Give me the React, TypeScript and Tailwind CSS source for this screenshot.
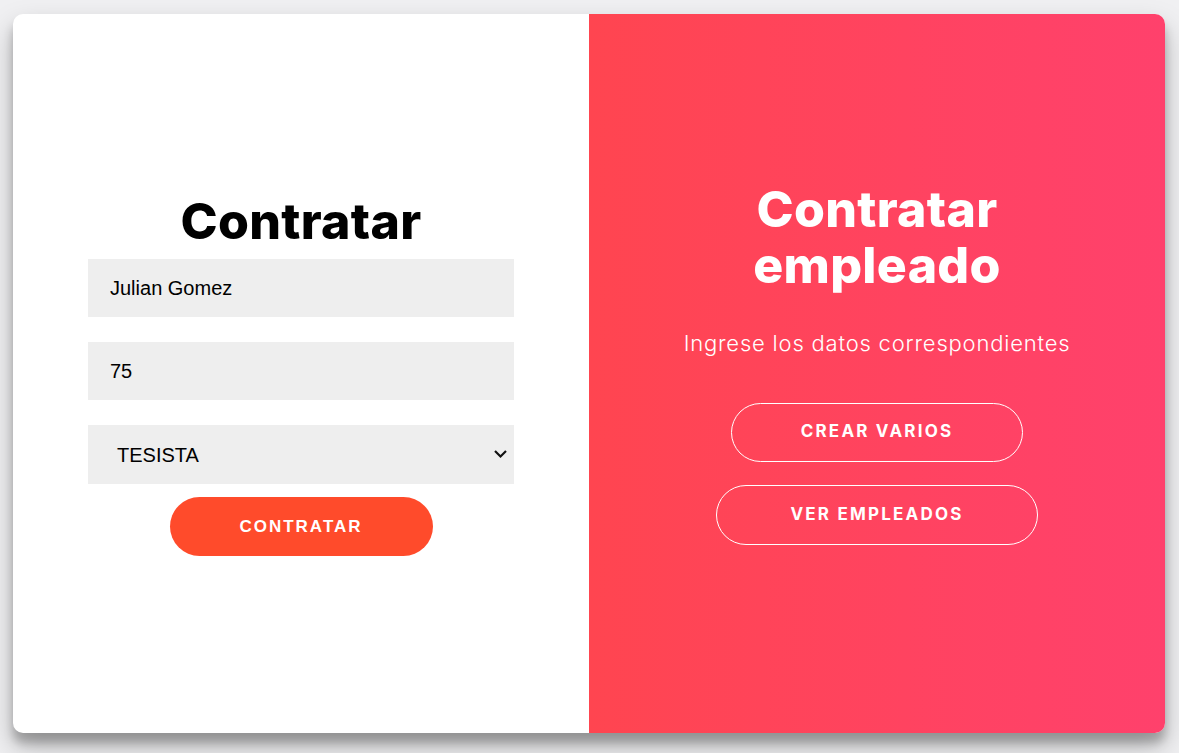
import React from 'react';

const mont = "font-['Inter','Noto_Sans',sans-serif]";

export default function App() {
  return (
    <div className="w-[1179px] h-[753px] bg-[#f0f0f2] flex items-start justify-start pl-[13px] pt-[14px]">
      <div className="w-[1152px] h-[719px] rounded-[10px] overflow-hidden bg-white flex shadow-[0_14px_28px_rgba(0,0,0,0.25),0_10px_10px_rgba(0,0,0,0.22)]">
        {/* formulario */}
        <div className="w-[576px] h-full flex flex-col items-center justify-center pt-[2px]">
          <h1 className={`${mont} text-[50px] leading-[56px] font-extrabold tracking-[0.3px] text-black mb-[10px]`}>Contratar</h1>
          <input
            defaultValue="Julian Gomez"
            className="w-[426px] h-[58px] bg-[#eeeeee] px-[22px] text-[20px] text-black outline-none font-['Liberation_Sans',Arial,sans-serif]"
          />
          <input
            defaultValue="75"
            className="w-[426px] h-[58px] mt-[25px] bg-[#eeeeee] px-[22px] text-[20px] text-black outline-none font-['Liberation_Sans',Arial,sans-serif]"
          />
          <div className="relative w-[426px] h-[59px] mt-[25px] bg-[#eeeeee] flex items-center">
            <span className="pl-[29px] text-[20px] text-black font-['Liberation_Sans',Arial,sans-serif]">TESISTA</span>
            <svg className="absolute right-[6px] top-[23px]" width="15" height="11" viewBox="0 0 15 11" fill="none">
              <path d="M2 3 L7.5 8.5 L13 3" stroke="#111" strokeWidth="2.2" />
            </svg>
          </div>
          <button className="mt-[13px] w-[263px] h-[59px] rounded-full bg-[#ff4b2b] text-white text-[17px] font-bold tracking-[2px] font-['Liberation_Sans',Arial,sans-serif]">
            CONTRATAR
          </button>
        </div>
        {/* panel derecho */}
        <div className="w-[576px] h-full bg-gradient-to-r from-[#ff4550] to-[#ff416c] flex flex-col items-center justify-center text-white pb-[22px]">
          <h1 className={`${mont} text-[50px] font-extrabold tracking-[0.3px] text-center flex flex-col items-center`}>
            <span className="block leading-[56px]">Contratar</span>
            <span className="block leading-[56px]">empleado</span>
          </h1>
          <p className={`${mont} mt-[35px] text-[22px] leading-[30px] font-light tracking-[0.8px]`}>Ingrese los datos correspondientes</p>
          <button className={`${mont} mt-[45px] w-[292px] h-[59px] rounded-full border border-white text-[17px] font-bold tracking-[2.2px]`}>
            CREAR VARIOS
          </button>
          <button className={`${mont} mt-[23px] w-[322px] h-[60px] rounded-full border border-white text-[17px] font-bold tracking-[2.2px]`}>
            VER EMPLEADOS
          </button>
        </div>
      </div>
    </div>
  );
}
